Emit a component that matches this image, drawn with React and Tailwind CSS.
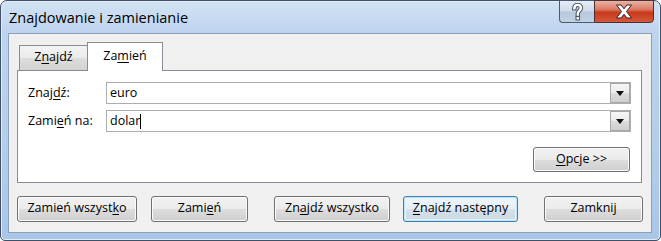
import React from "react";

const uiFont = "font-['Open_Sans','Noto_Sans',sans-serif]";

// Win7 style push button
function WinButton({ children, className = "", isDefault = false }) {
  return (
    <button
      className={`${className} flex items-center justify-center rounded-[3px] border pb-[1px] text-[12.5px] text-black ${
        isDefault
          ? "border-[#3c7fb1] bg-[linear-gradient(#eef5fa_0%,#e6eef4_50%,#d6e1ea_51%,#cbd8e2_100%)] shadow-[inset_0_0_0_1px_#bfe4f6,inset_0_0_0_2px_#e4f3fb]"
          : "border-[#707070] bg-[linear-gradient(#f2f2f2_0%,#ebebeb_50%,#dddddd_51%,#cfcfcf_100%)] shadow-[inset_0_0_0_1px_#fbfbfb]"
      }`}>
      {children}
    </button>
  );
}

// Combo box with the little arrow button on the right
function ComboBox({ value, caret = false }) {
  return (
    <div className="flex h-[22px] w-[525px] items-center border border-[#abadb3] bg-white">
      <div className="flex flex-1 items-center pl-[3px] text-[12.5px] leading-none text-black">
        {value}
        {caret && <span className="inline-block h-[15px] w-[1px] bg-black" />}
      </div>
      <div className="flex h-[20px] w-[20px] items-center justify-center border border-[#a7a7a7] bg-[linear-gradient(#f5f5f5_0%,#ececec_50%,#dcdcdc_51%,#cfcfcf_100%)]">
        <svg width="8" height="5" viewBox="0 0 8 5">
          <path d="M0 0 H8 L4 5 Z" fill="#111" />
        </svg>
      </div>
    </div>
  );
}

export default function App() {
  return (
    <div className={`h-[241px] w-[661px] bg-white ${uiFont}`}>
      <div className="relative flex h-full w-full flex-col rounded-t-[7px] rounded-b-[5px] border border-[#3f5068] bg-[linear-gradient(#d2e2f3_0%,#bdd4ee_14%,#b4cdea_60%,#aac6e7_100%)] pb-[7px] pl-[7px] pr-[8px] shadow-[inset_0_0_0_1px_#e3edf8]">
        {/* Title bar */}
        <div className="flex h-[32px] items-center pl-[1px] pt-[1px] text-[14.5px] text-black">
          Znajdowanie i zamienianie
        </div>

        {/* Caption buttons */}
        <div className="absolute right-[6px] top-[-1px] flex h-[23px]">
          <div className="flex w-[35px] items-center justify-center rounded-bl-[4px] border border-r-0 border-[#4a5b70] bg-[linear-gradient(#e5edf6_0%,#cfdbea_45%,#b7c8dd_55%,#c3d3e6_100%)]">
            <svg width="13" height="18" viewBox="0 0 13 18">
              <path
                d="M3.3 5.4 C3.3 3 4.9 1.9 6.6 1.9 C8.6 1.9 9.9 3.3 9.9 5.1 C9.9 7.4 6.8 8 6.8 10.6 V11.6"
                fill="none"
                stroke="#47505e"
                strokeWidth="4.4"
                strokeLinecap="square"
              />
              <path
                d="M3.3 5.4 C3.3 3 4.9 1.9 6.6 1.9 C8.6 1.9 9.9 3.3 9.9 5.1 C9.9 7.4 6.8 8 6.8 10.6 V11.6"
                fill="none"
                stroke="#fff"
                strokeWidth="2.4"
                strokeLinecap="square"
              />
              <rect x="5" y="13.6" width="3.6" height="3.4" fill="#fff" stroke="#47505e" strokeWidth="1" />
            </svg>
          </div>
          <div className="flex w-[60px] items-center justify-center rounded-br-[4px] border border-[#4a3030] bg-[linear-gradient(#eab3a6_0%,#dc7a63_40%,#c8391c_55%,#d4583a_100%)]">
            <svg width="18" height="15" viewBox="0 0 18 15">
              <path
                d="M1.5 1 H6 L9 4.8 L12 1 H16.5 L11.5 7.5 L16.5 14 H12 L9 10.2 L6 14 H1.5 L6.5 7.5 Z"
                fill="#fff"
                stroke="#3b2323"
                strokeWidth="1"
                strokeLinejoin="round"
              />
            </svg>
          </div>
        </div>

        {/* Client area */}
        <div className="flex flex-1 flex-col border border-[#8aa0bb] bg-[#f0f0f0] px-[8px] pt-[8px] text-[12.5px]">
          {/* Tabs */}
          <div className="relative z-10 ml-[2px] flex h-[28px] items-end">
            <div className="flex h-[25px] w-[68px] items-center justify-center border border-b-0 border-r-0 border-[#898c95] bg-[linear-gradient(#f3f3f3_0%,#ebebeb_50%,#dddddd_51%,#d3d3d3_100%)] pb-[1px]">
              Z<span className="underline underline-offset-2">n</span>ajdź
            </div>
            <div className="-mb-[1px] flex h-[29px] w-[76px] items-start justify-center border border-b-0 border-[#898c95] bg-white pt-[4px]">
              Za<span className="underline underline-offset-2">m</span>ień
            </div>
          </div>

          {/* Tab panel */}
          <div className="flex h-[113px] w-[625px] flex-col border border-[#898c95] bg-white px-[10px] pt-[11px]">
            <div className="flex items-center">
              <div className="w-[78px]">
                Znaj<span className="underline underline-offset-2">d</span>ź:
              </div>
              <ComboBox value="euro" />
            </div>
            <div className="mt-[6px] flex items-center">
              <div className="w-[78px]">
                Zami<span className="underline underline-offset-2">e</span>ń na:
              </div>
              <ComboBox value="dolar" caret />
            </div>
            <div className="mt-[15px] flex justify-end pr-[1px]">
              <WinButton className="h-[25px] w-[97px]">
                <span className="underline underline-offset-2">O</span>pcje &gt;&gt;
              </WinButton>
            </div>
          </div>

          {/* Bottom buttons */}
          <div className="mt-[13px] flex">
            <WinButton className="h-[26px] w-[120px]">
              Zamień wszyst<span className="underline underline-offset-2">k</span>o
            </WinButton>
            <WinButton className="ml-[14px] h-[26px] w-[97px]">
              Zami<span className="underline underline-offset-2">e</span>ń
            </WinButton>
            <WinButton className="ml-[26px] h-[26px] w-[116px]">
              Zn<span className="underline underline-offset-2">a</span>jdź wszystko
            </WinButton>
            <WinButton isDefault className="ml-[13px] h-[26px] w-[115px]">
              <span className="underline underline-offset-2">Z</span>najdź następny
            </WinButton>
            <WinButton className="ml-[26px] h-[26px] w-[99px]">
              Zamknij
            </WinButton>
          </div>
        </div>
      </div>
    </div>
  );
}
